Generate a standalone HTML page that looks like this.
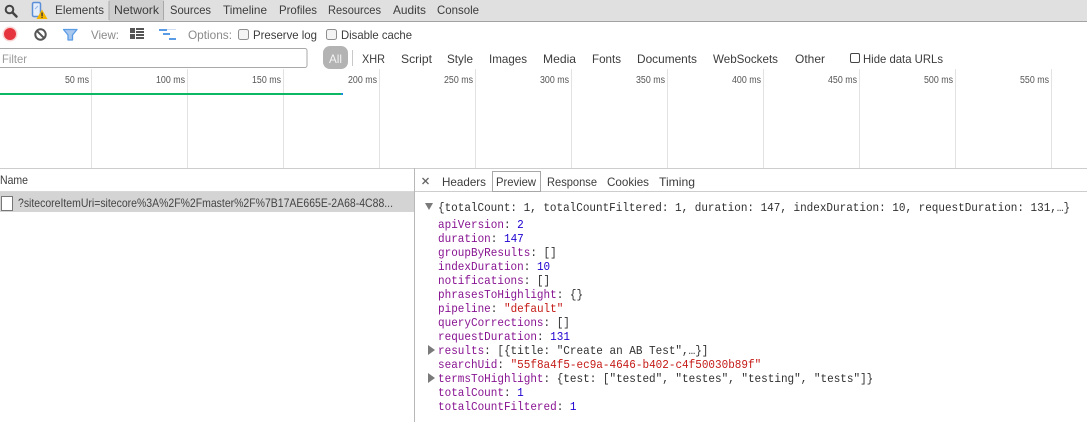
<!DOCTYPE html>
<html><head><meta charset="utf-8"><style>
html,body{margin:0;padding:0;background:#fff;width:1087px;height:422px;overflow:hidden}
svg{display:block;position:absolute;left:0;top:0}
.u{font:12px "Liberation Sans",sans-serif;fill:#3c3c3c}
.g{fill:#8a8a8a}
.t{font:10px "Liberation Sans",sans-serif;fill:#555}
.m{font:12px "Liberation Mono",monospace;fill:#303030}
.k{fill:#881391}.n{fill:#1c00cf}.s{fill:#c41a16}
</style></head><body>
<svg width="1087" height="422" viewBox="0 0 1087 422" xmlns="http://www.w3.org/2000/svg">
<rect x="0" y="0" width="1087" height="21" fill="#e0e0e0"/>
<rect x="0" y="21" width="1087" height="1" fill="#a3a3a3"/>
<rect x="109" y="0" width="55" height="21" fill="#cfcfcf"/>
<rect x="108.500" y="1" width="1" height="19" fill="#a8a8a8"/><rect x="163" y="1" width="1" height="19" fill="#a8a8a8"/>
<circle cx="9.500" cy="9.500" r="3.800" fill="none" stroke="#444" stroke-width="2"/><path d="M12.500 12.500l4 4" stroke="#444" stroke-width="2.500" stroke-linecap="round"/>
<rect x="32.500" y="2.500" width="8" height="14" rx="1.500" fill="#e4edf9" stroke="#5a8fd8" stroke-width="1.500"/><path d="M35 9l3-3" stroke="#8fb3e5"/>
<path d="M42 9.500L47.500 19H36.500Z" fill="#f4b400"/><rect x="41.400" y="12.500" width="1.300" height="3.500" fill="#333"/><rect x="41.400" y="16.600" width="1.300" height="1.300" fill="#333"/>
<g class="u">
<text x="55" y="14" textLength="49" lengthAdjust="spacingAndGlyphs">Elements</text>
<text x="114" y="14" textLength="45" lengthAdjust="spacingAndGlyphs">Network</text>
<text x="170" y="14" textLength="41" lengthAdjust="spacingAndGlyphs">Sources</text>
<text x="223" y="14" textLength="44" lengthAdjust="spacingAndGlyphs">Timeline</text>
<text x="279" y="14" textLength="38" lengthAdjust="spacingAndGlyphs">Profiles</text>
<text x="328" y="14" textLength="53" lengthAdjust="spacingAndGlyphs">Resources</text>
<text x="393" y="14" textLength="33" lengthAdjust="spacingAndGlyphs">Audits</text>
<text x="437" y="14" textLength="42" lengthAdjust="spacingAndGlyphs">Console</text>
</g>
<circle cx="10" cy="34" r="7.500" fill="#f3b4b4" opacity=".6"/><circle cx="10" cy="34" r="6" fill="#e5343d"/>
<circle cx="40.500" cy="34.500" r="5.200" fill="none" stroke="#555" stroke-width="2"/><path d="M36.800 30.800l7.400 7.400" stroke="#555" stroke-width="2"/>
<path d="M63.500 29.500H77L72.500 35V40H68V35Z" fill="#a9c8ee" stroke="#5a9be6" stroke-width="1.300" stroke-linejoin="round"/>
<text class="u g" x="91" y="39" textLength="28" lengthAdjust="spacingAndGlyphs">View:</text>
<path d="M130 28h5v5h-5zM130 34h5v5h-5z" fill="#555"/><path d="M136 28h8v2h-8zM136 31h8v2h-8zM136 34h8v2h-8zM136 37h8v2h-8z" fill="#555"/>
<path d="M159 29h8v2h-8zM163 33h7v2h-7zM169 38h7v2h-7z" fill="#5a9be6"/><path d="M167 29h9v1h-9z" fill="#cfdff3"/>
<text class="u g" x="188" y="39" textLength="44" lengthAdjust="spacingAndGlyphs">Options:</text>
<rect x="238.500" y="29.500" width="10" height="10" rx="2" fill="#f4f4f4" stroke="#8e8e8e"/>
<text class="u" x="253" y="39" textLength="64" lengthAdjust="spacingAndGlyphs">Preserve log</text>
<rect x="326.500" y="29.500" width="10" height="10" rx="2" fill="#f4f4f4" stroke="#8e8e8e"/>
<text class="u" x="341" y="39" textLength="71" lengthAdjust="spacingAndGlyphs">Disable cache</text>
<rect x="-3" y="48.500" width="310" height="19" rx="2" fill="#fff" stroke="#a9a9a9"/>
<text class="u" x="2" y="63" textLength="25" lengthAdjust="spacingAndGlyphs" style="fill:#9a9a9a">Filter</text>
<rect x="323" y="46" width="25" height="23" rx="7" fill="#b3b3b3"/>
<text class="u" x="329" y="63" textLength="13" lengthAdjust="spacingAndGlyphs" style="fill:#f4f4f4">All</text>
<rect x="352" y="50" width="1" height="16" fill="#c8c8c8"/>
<g class="u">
<text x="362" y="63" textLength="23" lengthAdjust="spacingAndGlyphs">XHR</text>
<text x="401" y="63" textLength="31" lengthAdjust="spacingAndGlyphs">Script</text>
<text x="447" y="63" textLength="26" lengthAdjust="spacingAndGlyphs">Style</text>
<text x="489" y="63" textLength="38" lengthAdjust="spacingAndGlyphs">Images</text>
<text x="543" y="63" textLength="33" lengthAdjust="spacingAndGlyphs">Media</text>
<text x="592" y="63" textLength="29" lengthAdjust="spacingAndGlyphs">Fonts</text>
<text x="637" y="63" textLength="60" lengthAdjust="spacingAndGlyphs">Documents</text>
<text x="713" y="63" textLength="65" lengthAdjust="spacingAndGlyphs">WebSockets</text>
<text x="795" y="63" textLength="30" lengthAdjust="spacingAndGlyphs">Other</text>
<text x="863" y="63" textLength="80" lengthAdjust="spacingAndGlyphs">Hide data URLs</text>
</g>
<rect x="850.500" y="53.500" width="9" height="9" rx="1.500" fill="#fff" stroke="#444"/>
<g fill="#e2e2e2">
<rect x="91" y="69" width="1" height="99"/><rect x="187" y="69" width="1" height="99"/><rect x="283" y="69" width="1" height="99"/><rect x="379" y="69" width="1" height="99"/><rect x="475" y="69" width="1" height="99"/><rect x="571" y="69" width="1" height="99"/><rect x="667" y="69" width="1" height="99"/><rect x="763" y="69" width="1" height="99"/><rect x="859" y="69" width="1" height="99"/><rect x="955" y="69" width="1" height="99"/><rect x="1051" y="69" width="1" height="99"/>
</g>
<g class="t">
<text x="65" y="83" textLength="24" lengthAdjust="spacingAndGlyphs">50 ms</text>
<text x="156" y="83" textLength="29" lengthAdjust="spacingAndGlyphs">100 ms</text>
<text x="252" y="83" textLength="29" lengthAdjust="spacingAndGlyphs">150 ms</text>
<text x="348" y="83" textLength="29" lengthAdjust="spacingAndGlyphs">200 ms</text>
<text x="444" y="83" textLength="29" lengthAdjust="spacingAndGlyphs">250 ms</text>
<text x="540" y="83" textLength="29" lengthAdjust="spacingAndGlyphs">300 ms</text>
<text x="636" y="83" textLength="29" lengthAdjust="spacingAndGlyphs">350 ms</text>
<text x="732" y="83" textLength="29" lengthAdjust="spacingAndGlyphs">400 ms</text>
<text x="828" y="83" textLength="29" lengthAdjust="spacingAndGlyphs">450 ms</text>
<text x="924" y="83" textLength="29" lengthAdjust="spacingAndGlyphs">500 ms</text>
<text x="1020" y="83" textLength="29" lengthAdjust="spacingAndGlyphs">550 ms</text>
</g>
<rect x="0" y="93" width="341" height="2" fill="#0cb863"/><rect x="341" y="93" width="2" height="2" fill="#1a8fe0"/>
<rect x="0" y="168" width="1087" height="1" fill="#cdcdcd"/>
<text class="u" x="0" y="184" textLength="28" lengthAdjust="spacingAndGlyphs">Name</text>
<rect x="0" y="191" width="414" height="1" fill="#d8d8d8"/>
<rect x="0" y="192" width="414" height="20" fill="#d4d4d4"/>
<rect x="1.500" y="196.500" width="11" height="14" fill="#fff" stroke="#777"/>
<text class="u" x="18" y="207" textLength="375" lengthAdjust="spacingAndGlyphs" style="fill:#444">?sitecoreItemUri=sitecore%3A%2F%2Fmaster%2F%7B17AE665E-2A68-4C88...</text>
<rect x="414" y="168" width="1" height="254" fill="#b8b8b8"/>
<path d="M422.500 178l6 6M428.500 178l-6 6" stroke="#666" stroke-width="1.300"/>
<rect x="415" y="191" width="672" height="1" fill="#cdcdcd"/>
<rect x="492.500" y="171.500" width="48" height="20" fill="#fff" stroke="#a8a8a8"/>
<g class="u">
<text x="442" y="186" textLength="44" lengthAdjust="spacingAndGlyphs">Headers</text>
<text x="496" y="186" textLength="40" lengthAdjust="spacingAndGlyphs">Preview</text>
<text x="547" y="186" textLength="50" lengthAdjust="spacingAndGlyphs">Response</text>
<text x="607" y="186" textLength="42" lengthAdjust="spacingAndGlyphs">Cookies</text>
<text x="659" y="186" textLength="36" lengthAdjust="spacingAndGlyphs">Timing</text>
</g>
<path d="M425 203H433L429 210Z" fill="#7a7a7a"/>
<path d="M428 345V355L435 350Z M428 373V383L435 378Z" fill="#7a7a7a"/>
<g class="m" transform="translate(438,0) scale(.9167,1)">
<text x="0" y="211" textLength="689.500" lengthAdjust="spacing">{totalCount: 1, totalCountFiltered: 1, duration: 147, indexDuration: 10, requestDuration: 131,…}</text>
<text x="0" y="228"><tspan class="k">apiVersion</tspan>: <tspan class="n">2</tspan></text>
<text x="0" y="242"><tspan class="k">duration</tspan>: <tspan class="n">147</tspan></text>
<text x="0" y="256"><tspan class="k">groupByResults</tspan>: []</text>
<text x="0" y="270"><tspan class="k">indexDuration</tspan>: <tspan class="n">10</tspan></text>
<text x="0" y="284"><tspan class="k">notifications</tspan>: []</text>
<text x="0" y="298"><tspan class="k">phrasesToHighlight</tspan>: {}</text>
<text x="0" y="312"><tspan class="k">pipeline</tspan>: <tspan class="s">"default"</tspan></text>
<text x="0" y="326"><tspan class="k">queryCorrections</tspan>: []</text>
<text x="0" y="340"><tspan class="k">requestDuration</tspan>: <tspan class="n">131</tspan></text>
<text x="0" y="354"><tspan class="k">results</tspan>: [{title: "Create an AB Test",…}]</text>
<text x="0" y="368"><tspan class="k">searchUid</tspan>: <tspan class="s">"55f8a4f5-ec9a-4646-b402-c4f50030b89f"</tspan></text>
<text x="0" y="382"><tspan class="k">termsToHighlight</tspan>: {test: ["tested", "testes", "testing", "tests"]}</text>
<text x="0" y="396"><tspan class="k">totalCount</tspan>: <tspan class="n">1</tspan></text>
<text x="0" y="410"><tspan class="k">totalCountFiltered</tspan>: <tspan class="n">1</tspan></text>
</g>
</svg>
</body></html>
